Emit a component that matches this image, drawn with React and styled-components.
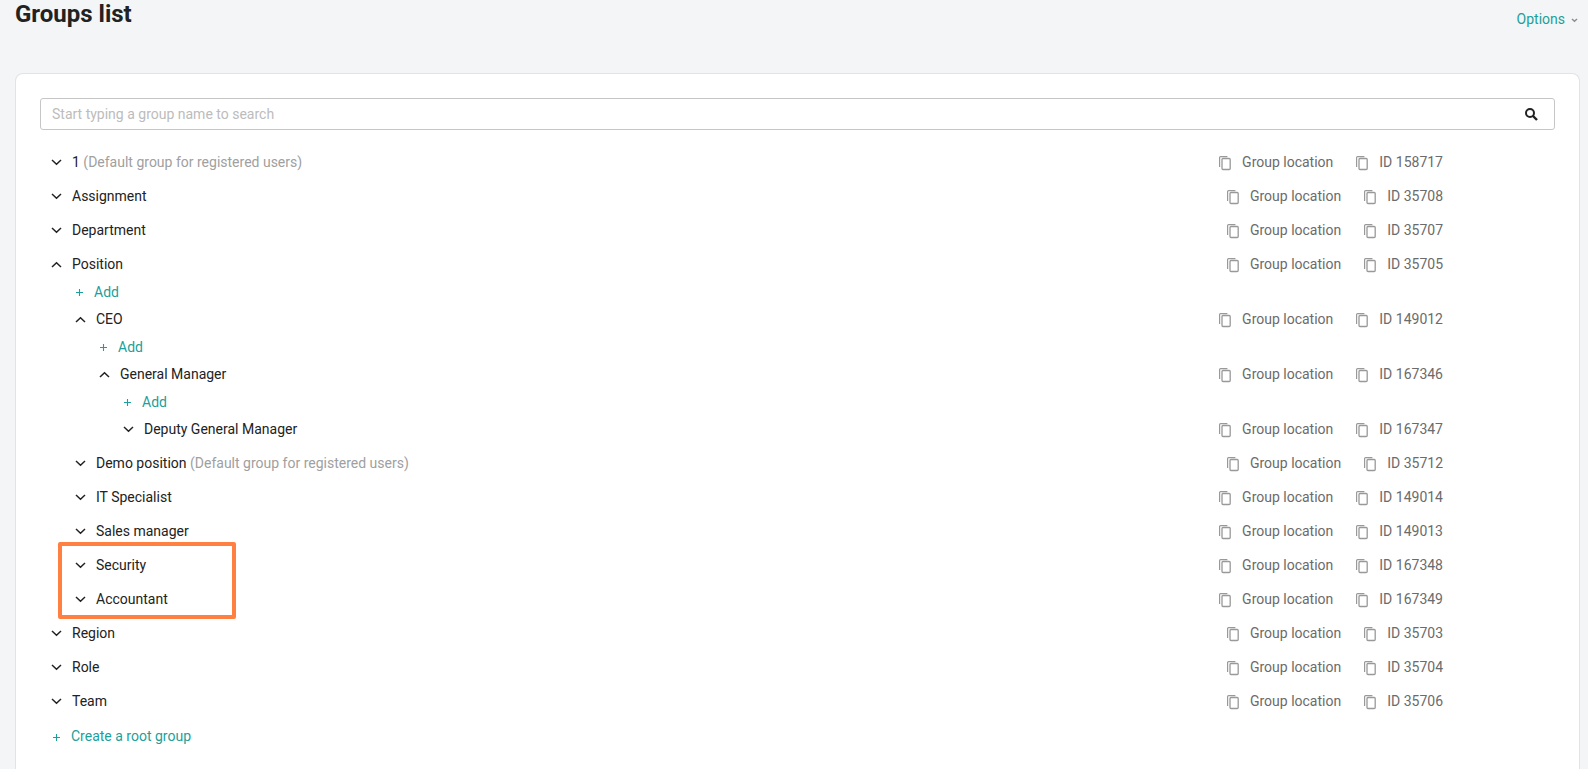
import { useState } from "react";
import styled, { createGlobalStyle } from "styled-components";

const GlobalStyle = createGlobalStyle`
  *, *::before, *::after {
    box-sizing: border-box;
  }
  html, body {
    margin: 0;
    background: #f3f5f7;
  }
  body {
    color: #222222;
    font-family: Roboto, "Liberation Sans", sans-serif;
    font-size: 14px;
    line-height: 20px;
  }
  button, input {
    font: inherit;
  }
`;

const Page = styled.main`
  display: flex;
  flex-direction: column;
  min-height: 100vh;
  padding: 0 8px 0 15px;
`;

const Header = styled.header`
  display: flex;
  justify-content: space-between;
  align-items: flex-start;
  height: 73px;
`;

const Title = styled.h1`
  margin: 0;
  font-size: 24px;
  font-weight: 700;
  line-height: 28px;
`;

const PlainButton = styled.button`
  display: flex;
  align-items: center;
  padding: 0;
  border: 0;
  background: none;
  cursor: pointer;
`;

const OptionsButton = styled(PlainButton)`
  gap: 6px;
  margin-top: 9px;
  padding-right: 2px;
  color: #1ba09b;

  svg {
    margin-top: 2px;
    color: #8b8f92;
  }
`;

const Card = styled.section`
  flex: 1;
  padding: 24px 24px 0;
  border: 1px solid #e1e3e5;
  border-bottom: 0;
  border-radius: 8px 8px 0 0;
  background: #ffffff;
`;

const SearchBox = styled.form`
  display: flex;
  align-items: center;
  height: 32px;
  margin-bottom: 15px;
  border: 1px solid #c6c6c6;
  border-radius: 3px;
`;

const SearchInput = styled.input`
  flex: 1;
  padding: 0 11px;
  border: 0;
  outline: none;
  background: none;
  color: inherit;

  &::placeholder {
    color: #bcbcbc;
    opacity: 1;
  }
`;

const SearchButton = styled(PlainButton)`
  justify-content: center;
  width: 46px;
  height: 30px;
  color: #222222;
`;

const List = styled.ul`
  margin: 0;
  padding: 0 0 0 ${({ $nested }) => ($nested ? "24px" : "0")};
  list-style: none;
`;

const Item = styled.li`
  position: relative;

  /* frame around this row and the next one */
  &::after {
    content: ${({ $framed }) => ($framed ? '""' : "none")};
    position: absolute;
    top: -6px;
    left: -6px;
    width: 178px;
    height: 77px;
    border: 4px solid #ff8040;
    border-radius: 2px;
    pointer-events: none;
  }
`;

const Row = styled.div`
  display: flex;
  align-items: center;
  height: 34px;
  padding: 0 112px 0 11px;
`;

const Toggle = styled(PlainButton)`
  height: 20px;
  margin-right: 10px;
  padding-top: 1px;
  color: #222222;
`;

const Name = styled.span`
  flex: 1;
`;

const Note = styled.span`
  color: #a0a0a0;
`;

const Actions = styled.div`
  display: flex;
  gap: 23px;
`;

const CopyButton = styled(PlainButton)`
  gap: 11px;
  color: #6b6b6b;

  svg {
    color: #999999;
  }
`;

const AddButton = styled(PlainButton)`
  gap: 9px;
  height: 21px;
  padding-left: 10px;
  color: #1ba09b;
`;

const CreateButton = styled(AddButton)`
  height: 36px;
  padding-left: 11px;
`;

const Chevron = ({ up }) => (
  <svg width="11" height="7" viewBox="0 0 11 7" fill="none" stroke="currentColor" strokeWidth="1.5" aria-hidden="true">
    <path d={up ? "M1 6l4.5-4.3L10 6" : "M1 1l4.5 4.3L10 1"} />
  </svg>
);

const SmallChevron = () => (
  <svg width="7" height="5" viewBox="0 0 7 5" fill="none" stroke="currentColor" strokeWidth="1.5" aria-hidden="true">
    <path d="M1 1l2.5 2.3L6 1" />
  </svg>
);

const Plus = () => (
  <svg width="11" height="9" viewBox="0 0 11 9" stroke="currentColor" strokeWidth="1.1" aria-hidden="true">
    <path d="M2 5.5h7M5.5 2v7" />
  </svg>
);

const CopyIcon = () => (
  <svg width="12" height="18" viewBox="0 0 12 18" fill="none" stroke="currentColor" aria-hidden="true">
    <path d="M.6 14V4.6q0-1 1-1H8.4" strokeWidth="1.2" />
    <rect x="3" y="5.5" width="8.2" height="11" rx="1" strokeWidth="1.3" />
  </svg>
);

const SearchIcon = () => (
  <svg width="13" height="13" viewBox="0 0 13 13" fill="none" stroke="currentColor" aria-hidden="true">
    <circle cx="5" cy="5" r="4" strokeWidth="2" />
    <path d="M8 8l4 4" strokeWidth="2.4" />
  </svg>
);

const groups = [
  { name: "1", id: 158717, isDefault: true },
  { name: "Assignment", id: 35708 },
  { name: "Department", id: 35707 },
  {
    name: "Position",
    id: 35705,
    children: [
      {
        name: "CEO",
        id: 149012,
        children: [
          {
            name: "General Manager",
            id: 167346,
            children: [{ name: "Deputy General Manager", id: 167347 }],
          },
        ],
      },
      { name: "Demo position", id: 35712, isDefault: true },
      { name: "IT Specialist", id: 149014 },
      { name: "Sales manager", id: 149013 },
      { name: "Security", id: 167348, framed: true },
      { name: "Accountant", id: 167349 },
    ],
  },
  { name: "Region", id: 35703 },
  { name: "Role", id: 35704 },
  { name: "Team", id: 35706 },
];

const Group = ({ group }) => {
  const children = group.children || [];
  const [open, setOpen] = useState(children.length > 0);

  return (
    <Item $framed={group.framed}>
      <Row>
        <Toggle type="button" aria-expanded={open} aria-label={group.name} onClick={() => setOpen(!open)}>
          <Chevron up={open} />
        </Toggle>
        <Name>
          {group.name}
          {group.isDefault && <Note> (Default group for registered users)</Note>}
        </Name>
        <Actions>
          <CopyButton type="button">
            <CopyIcon />
            Group location
          </CopyButton>
          <CopyButton type="button">
            <CopyIcon />
            ID {group.id}
          </CopyButton>
        </Actions>
      </Row>
      {open && (
        <List $nested>
          <li>
            <AddButton type="button">
              <Plus />
              Add
            </AddButton>
          </li>
          {children.map((child) => (
            <Group key={child.id} group={child} />
          ))}
        </List>
      )}
    </Item>
  );
};

const App = () => {
  return (
    <>
      <GlobalStyle />
      <Page>
        <Header>
          <Title>Groups list</Title>
          <OptionsButton type="button">
            Options
            <SmallChevron />
          </OptionsButton>
        </Header>
        <Card>
          <SearchBox role="search" onSubmit={(e) => e.preventDefault()}>
            <SearchInput
              type="text"
              aria-label="Group name"
              placeholder="Start typing a group name to search"
            />
            <SearchButton type="submit" aria-label="Search">
              <SearchIcon />
            </SearchButton>
          </SearchBox>
          <List>
            {groups.map((group) => (
              <Group key={group.id} group={group} />
            ))}
          </List>
          <CreateButton type="button">
            <Plus />
            Create a root group
          </CreateButton>
        </Card>
      </Page>
    </>
  );
};

export default App;
